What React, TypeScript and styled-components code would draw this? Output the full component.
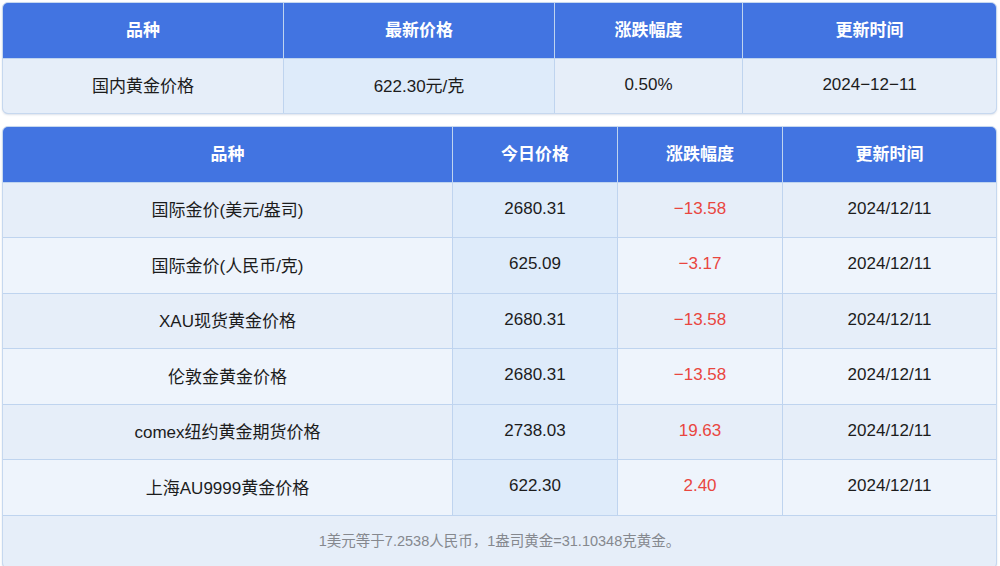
import React from 'react';
import styled, { createGlobalStyle } from 'styled-components';

const GlobalStyle = createGlobalStyle`
  body {
    margin: 0;
    background: #fff;
    font-family: "Liberation Sans", "Noto Sans CJK SC", sans-serif;
  }
`;

const Page = styled.div`
  padding: 2px 3px 0 2px;
  display: flex;
  flex-direction: column;
  gap: 12px;
`;

const Table = styled.div<{ $cols: string }>`
  display: grid;
  grid-template-columns: ${(p) => p.$cols};
  gap: 1px;
  background: #bfd4ef;
  border: 1px solid #c6d8ef;
  border-radius: 6px;
  overflow: hidden;
  box-shadow: 0 1px 2px rgba(60, 90, 140, 0.18);
`;

const HeadCell = styled.div`
  height: 54.5px;
  box-sizing: border-box;
  padding-bottom: 3px;
  display: flex;
  align-items: center;
  justify-content: center;
  background: #4274e1;
  color: #fff;
  font-weight: 700;
  font-size: 17px;
`;

const Cell = styled.div<{ $bg: string; $red?: boolean }>`
  height: 54.5px;
  box-sizing: border-box;
  padding-bottom: 2px;
  display: flex;
  align-items: center;
  justify-content: center;
  background: ${(p) => p.$bg};
  color: ${(p) => (p.$red ? '#e9463f' : '#1c1c1c')};
  font-size: 17px;
`;

const Footer = styled.div`
  grid-column: 1 / -1;
  height: 52px;
  box-sizing: border-box;
  padding-bottom: 5px;
  display: flex;
  align-items: center;
  justify-content: center;
  background: #e6eef9;
  color: #85888e;
  font-size: 14.5px;
`;

const PRICE_BG = '#deebfa';
const rowBg = (i: number) => (i % 2 === 0 ? '#e6eef9' : '#eef4fc');

type Row = { name: string; price: string; change: string; date: string };

const rows: Row[] = [
  { name: '国际金价(美元/盎司)', price: '2680.31', change: '−13.58', date: '2024/12/11' },
  { name: '国际金价(人民币/克)', price: '625.09', change: '−3.17', date: '2024/12/11' },
  { name: 'XAU现货黄金价格', price: '2680.31', change: '−13.58', date: '2024/12/11' },
  { name: '伦敦金黄金价格', price: '2680.31', change: '−13.58', date: '2024/12/11' },
  { name: 'comex纽约黄金期货价格', price: '2738.03', change: '19.63', date: '2024/12/11' },
  { name: '上海AU9999黄金价格', price: '622.30', change: '2.40', date: '2024/12/11' },
];

export default function App() {
  return (
    <>
      <GlobalStyle />
      <Page>
        <Table $cols="280px 270px 187px 1fr">
          <HeadCell>品种</HeadCell>
          <HeadCell>最新价格</HeadCell>
          <HeadCell>涨跌幅度</HeadCell>
          <HeadCell>更新时间</HeadCell>
          <Cell $bg={rowBg(0)}>国内黄金价格</Cell>
          <Cell $bg={PRICE_BG}>622.30元/克</Cell>
          <Cell $bg={rowBg(0)}>0.50%</Cell>
          <Cell $bg={rowBg(0)}>2024−12−11</Cell>
        </Table>
        <Table $cols="449px 164px 164px 1fr">
          <HeadCell>品种</HeadCell>
          <HeadCell>今日价格</HeadCell>
          <HeadCell>涨跌幅度</HeadCell>
          <HeadCell>更新时间</HeadCell>
          {rows.map((r, i) => (
            <React.Fragment key={r.name}>
              <Cell $bg={rowBg(i)}>{r.name}</Cell>
              <Cell $bg={PRICE_BG}>{r.price}</Cell>
              <Cell $bg={rowBg(i)} $red>
                {r.change}
              </Cell>
              <Cell $bg={rowBg(i)}>{r.date}</Cell>
            </React.Fragment>
          ))}
          <Footer>1美元等于7.2538人民币，1盎司黄金=31.10348克黄金。</Footer>
        </Table>
      </Page>
    </>
  );
}
